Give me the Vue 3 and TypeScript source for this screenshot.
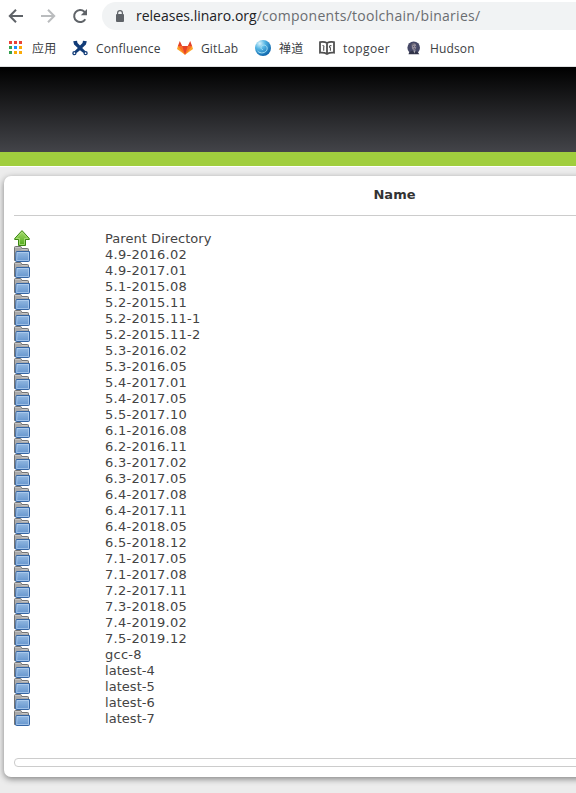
<script setup lang="ts">
const entries: string[] = [
  'Parent Directory', '4.9-2016.02', '4.9-2017.01', '5.1-2015.08', '5.2-2015.11',
  '5.2-2015.11-1', '5.2-2015.11-2', '5.3-2016.02', '5.3-2016.05', '5.4-2017.01',
  '5.4-2017.05', '5.5-2017.10', '6.1-2016.08', '6.2-2016.11', '6.3-2017.02',
  '6.3-2017.05', '6.4-2017.08', '6.4-2017.11', '6.4-2018.05', '6.5-2018.12',
  '7.1-2017.05', '7.1-2017.08', '7.2-2017.11', '7.3-2018.05', '7.4-2019.02',
  '7.5-2019.12', 'gcc-8', 'latest-4', 'latest-5', 'latest-6', 'latest-7',
]
const appColors: string[] = [
  '#ea4335', '#ea4335', '#ea4335',
  '#34a853', '#1a90ff', '#fbab09',
  '#34a050', '#fbab09', '#fbab09',
]
</script>

<template>
  <div class="browser">
    <header class="chrome">
      <div class="toolbar">
        <svg class="nav" width="16" height="16" viewBox="0 0 16 16"><path d="M15 8H2M8 1.8 1.8 8 8 14.2" fill="none" stroke="#5f6368" stroke-width="2" /></svg>
        <svg class="nav" width="16" height="16" viewBox="0 0 16 16"><path d="M1 8h13M8 1.8 14.2 8 8 14.2" fill="none" stroke="#babcbe" stroke-width="2" /></svg>
        <svg class="nav" width="16" height="16" viewBox="0 0 16 16"><path d="M13.3 11.2A6 6 0 1 1 12.4 3.8L14 5.4" fill="none" stroke="#5f6368" stroke-width="2" /><path d="M15 1v6.2H8.8z" fill="#5f6368" /></svg>
        <div class="address">
          <svg class="lock" width="10" height="12" viewBox="0 0 10 12"><rect x="1" y="4" width="8" height="8" rx="1" fill="#5f6368" /><path d="M2.6 5V3a2.4 2.4 0 0 1 4.8 0v2" fill="none" stroke="#5f6368" stroke-width="1.2" /></svg>
          <span class="url"><span class="host">releases.linaro.org</span><span class="path">/components/toolchain/binaries/</span></span>
        </div>
      </div>
      <nav class="bookmarks">
        <a class="mark apps">
          <svg width="14" height="14" viewBox="0 0 14 14"><rect v-for="(c, i) in appColors" :key="i" :x="(i % 3) * 5" :y="Math.floor(i / 3) * 5" width="3" height="3" :fill="c" /></svg>
          <span>应用</span>
        </a>
        <a class="mark confluence">
          <svg width="16" height="16" viewBox="0 0 16 16">
            <path d="M1.2 1.2 5 .8 5.5 3 8 5.6 10.5 3l.5-2.2 3.8.4-.9 3.2L10.2 8l3.3 3.2-2 1.9L8 10.2l-3.5 2.9-2-1.9L5.8 8 2.1 4.4z" fill="#123c78" />
            <g fill="#fff" stroke="#123c78" stroke-width="1.3"><circle cx="2.4" cy="13.2" r="1.5" /><circle cx="13.6" cy="13.2" r="1.5" /></g>
          </svg>
          <span>Confluence</span>
        </a>
        <a class="mark gitlab">
          <svg width="16" height="16" viewBox="0 0 16 16"><path d="M8 14.8 0 9 .9 6h14.2l.9 3z" fill="#fca326" /><path d="M8 14.8.9 6h14.2z" fill="#fc6d26" /><path d="M8 14.8 5.2 6h5.6zM.9 6 2.8 1l2.4 5zM15.1 6l-1.9-5-2.4 5z" fill="#e24329" /></svg>
          <span>GitLab</span>
        </a>
        <a class="mark zentao">
          <svg width="16" height="16" viewBox="0 0 16 16">
            <defs><radialGradient id="globe" cx=".3" cy=".22" r=".85"><stop offset="0" stop-color="#d8f3fc" /><stop offset=".4" stop-color="#54b5e4" /><stop offset="1" stop-color="#075fa8" /></radialGradient></defs>
            <circle cx="8" cy="8" r="8" fill="url(#globe)" />
            <path d="M2.6 11c2.5 3 8.4 2.3 9.4-1.5.9-3.3-2.1-5.2-4.4-4.1-2.5 1.2-1.8 4.2.4 4.2" fill="none" stroke="#a5e2f7" />
          </svg>
          <span>禅道</span>
        </a>
        <a class="mark topgoer">
          <svg width="16" height="16" viewBox="0 0 16 16"><path d="M1 2.2c3-.5 5-.3 7 .8 2-1.1 4-1.3 7-.8v10.5c-3-.4-5 0-7 1.2-2-1.2-4-1.6-7-1.2zM8 3v10.5" fill="none" stroke="#505050" stroke-width="1.8" /><path d="M3.5 5.5q2 0 1.2 2v3.3M12.4 5.6c-2-.4-2.6 2-1 2.2v3" fill="none" stroke="#505050" stroke-width="1.1" /></svg>
          <span>topgoer</span>
        </a>
        <a class="mark hudson">
          <svg width="16" height="16" viewBox="0 0 16 16"><circle cx="7.7" cy="7.8" r="6.3" fill="#454866" /><path d="M2.5 14.3c.2-2.4 2.5-3.6 4.7-3.6s5.2 1 6.1 3.6z" fill="#303348" /><ellipse cx="8" cy="6.7" rx="2.2" ry="3.2" fill="#928c9a" /><path d="M5.4 6C4.8 3.5 7.8 2.2 9.8 3.5l-2 1z" fill="#6b6775" /><path d="m7.2 10.5 1.4 3 1-3.2z" fill="#aaa7b0" /><path d="M7 6.5h1m1 0h1M7.8 8.7h1.5" stroke="#49455b" stroke-width=".7" /></svg>
          <span>Hudson</span>
        </a>
      </nav>
    </header>

    <div class="banner"></div>

    <main class="card">
      <div class="heading">Name</div>
      <ul class="listing">
        <li v-for="(name, i) in entries" :key="name" class="row">
          <svg v-if="i === 0" class="icon" width="16" height="16" viewBox="0 0 16 16">
            <defs><linearGradient id="up" x2="0" y2="1"><stop offset="0" stop-color="#a5db6b" /><stop offset="1" stop-color="#50aa1b" /></linearGradient></defs>
            <path d="M8 .6 15.3 8.5v1H11.5v6h-7v-6H.7v-1z" fill="url(#up)" stroke="#3b8612" stroke-linejoin="round" />
            <path d="M8 2.1 2.1 8.5h3.4v6h5v-6h3.4z" fill="none" stroke="#b8e589" stroke-width=".7" />
          </svg>
          <svg v-else class="icon" width="16" height="16" viewBox="0 0 16 16">
            <defs><linearGradient id="folder" x2="0" y2="1"><stop offset="0" stop-color="#93b9e2" /><stop offset="1" stop-color="#6595cd" /></linearGradient></defs>
            <path d="M.5 14.5v-13q0-1 1-1h4.8q.9 0 1.2 1l.4 1h5.6q1 0 1 1v11z" fill="#a9a9a9" stroke="#737373" />
            <path d="M1.5 2v-.5h4.8M7.5 3.5h6" fill="none" stroke="#c6c6c6" />
            <path d="M2.5 5.5h13v9q0 1-1 1h-12q-1 0-.9-1l.4-8z" fill="url(#folder)" stroke="#3465a4" />
            <path d="M3.1 6.5h11.4v8H2.7z" fill="none" stroke="#bcd6f2" stroke-opacity=".65" />
          </svg>
          <a class="name" :class="{ words: i === 0 || name.startsWith('latest') }">{{ name }}</a>
        </li>
      </ul>
      <div class="footer"></div>
    </main>
  </div>
</template>

<style>
body { margin: 0; background: #ececec; overflow: hidden; }
</style>

<style scoped>
.browser { height: 793px; overflow: hidden; background: #ececec; }
.chrome { height: 66px; background: #fff; border-bottom: 1px solid #dfe1e2; font-family: "Open Sans", "Noto Sans CJK SC", sans-serif; }
.toolbar { height: 32px; display: flex; align-items: center; padding-left: 8px; }
.nav { flex: none; margin-right: 16px; }
.address { height: 28px; flex: 1; margin-left: -2px; border-radius: 14px 0 0 14px; background: #f1f3f4; display: flex; align-items: center; padding-left: 13px; }
.lock { flex: none; }
.url { margin-left: 11px; font-size: 14px; line-height: 20px; white-space: nowrap; color: #6a6d71; }
.host { color: #202124; }
.path { letter-spacing: .28px; }
.bookmarks { height: 32px; display: grid; grid-template-columns: 63px 105px 78px 64px 87px 120px; padding-left: 9px; font-size: 12px; letter-spacing: .15px; color: #3c4043; }
.mark { display: flex; align-items: center; white-space: nowrap; height: 32px; }
.mark svg { flex: none; margin-right: 8px; }
.mark.apps svg { margin-right: 9px; }
.mark.topgoer { letter-spacing: .4px; }
.banner { height: 85px; background: linear-gradient(#000, #434449); border-bottom: 14px solid #a0ce3e; box-shadow: 0 1px #fff; }
.card { height: 601px; width: 781px; margin: 10px 0 0 4px; box-sizing: border-box; padding: 0 10px; border-radius: 7px; background: #fff; box-shadow: 0 2px 6px rgba(0, 0, 0, .45); font-family: Verdana, "DejaVu Sans", sans-serif; font-size: 13px; color: #444; }
.heading { height: 40px; box-sizing: border-box; border-bottom: 1px solid #ccc; line-height: 38px; text-align: center; font-weight: bold; color: #333; }
.listing { list-style: none; margin: 0; padding: 14px 0 0; }
.row { height: 16px; display: flex; align-items: flex-start; }
.icon { flex: none; margin-right: 75px; }
.name { line-height: 18px; letter-spacing: .27px; white-space: nowrap; }
.name.words { letter-spacing: .05px; }
.footer { height: 9px; box-sizing: border-box; margin-top: 32px; border: 1px solid #ccc; border-radius: 4px; }
</style>
